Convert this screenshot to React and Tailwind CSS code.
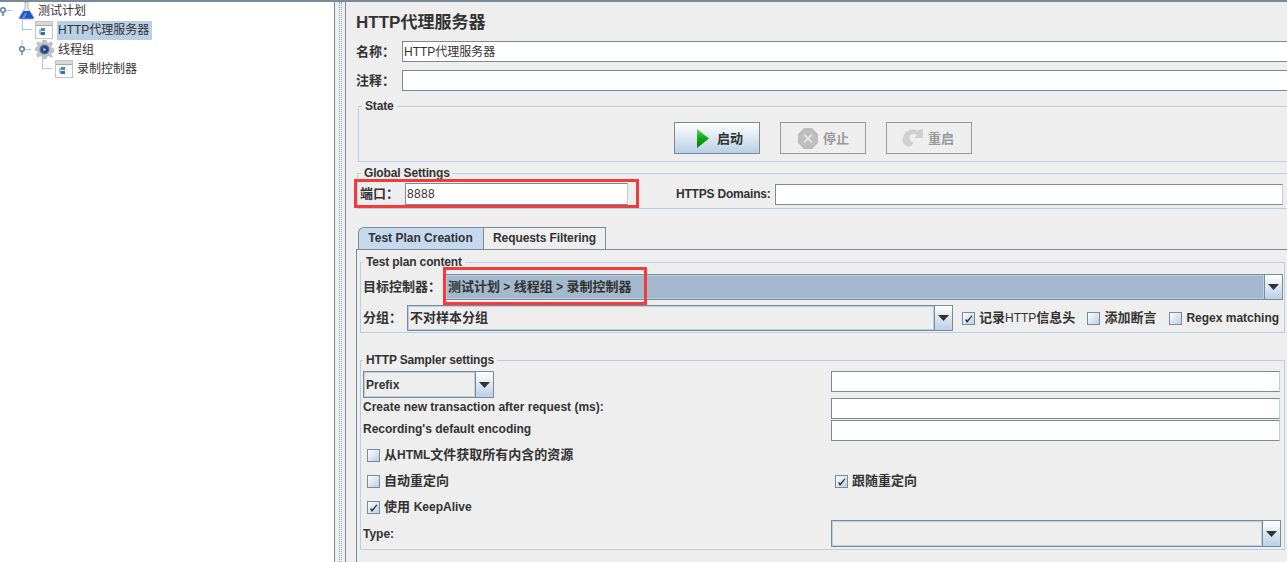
import React from 'react';

const FONT = "font-['Liberation_Sans','Noto_Sans_CJK_SC',sans-serif]";

const FlaskIcon = () => (
  <svg width="18" height="19" viewBox="0 0 18 19" className="shrink-0">
    <path d="M7 1h3v6l6 9c.4 1-.2 2-1.200 2H2.200C1.200 18 .6 17 1 16l6-9z" fill="#e4eaf1" stroke="#9aa7b4" strokeWidth="0.8" />
    <path d="M5.500 10h6l4 6.500c.2.700-.2 1.200-.8 1.200H2.300c-.6 0-1-.5-.8-1.200z" fill="#1f55c4" />
    <path d="M7 12h2l-2.500 5H4z" fill="#5f8fe6" />
  </svg>
);

const PageIcon = () => (
  <svg width="18" height="18" viewBox="0 0 18 18" className="shrink-0">
    <rect x="0.500" y="0.500" width="17" height="17" fill="#fff" stroke="#c4c4c4" />
    <rect x="1" y="1" width="16" height="3" fill="#d8d8d8" />
    <line x1="1" y1="4.500" x2="17" y2="4.500" stroke="#a8a8a8" />
    <rect x="6" y="7" width="4" height="3" fill="#3d8fd8" />
    <rect x="6" y="11" width="4" height="3" fill="#2d6fc0" />
    <path d="M5 8v5h1" fill="none" stroke="#555" strokeWidth="0.8" />
  </svg>
);

const GearIcon = () => (
  <svg width="19" height="19" viewBox="0 0 19 19" className="shrink-0">
    <path d="M8 0h3l.5 2.500 2.200.9L16 2l1.500 2.500-1.700 1.900.7 2.100 2.500.5v3l-2.500.5-.7 2.100 1.700 1.900L16 17l-2.300-1.400-2.200.9L11 19H8l-.5-2.500-2.200-.9L3 17l-1.500-2.500 1.700-1.900-.7-2.100L0 10V8l2.500-.5.7-2.100L1.500 4 3 2l2.300 1.400 2.200-.9z" fill="#c2c6cc" stroke="#9aa0a8" strokeWidth="0.6" />
    <circle cx="9.500" cy="9.500" r="5" fill="#4f6f96" />
    <circle cx="9.500" cy="9.500" r="3.500" fill="#27457a" />
    <path d="M8.300 7.500l3 2-3 2z" fill="#9fc0ee" />
  </svg>
);

// tree connector: vertical from the parent, then a short horizontal stub
const Elbow = ({ w, x }) => (
  <svg width={w} height="20" viewBox={`0 0 ${w} 20`} className="shrink-0">
    <line x1={x + 0.5} y1="0" x2={x + 0.5} y2="10" stroke="#a9c6e6" />
    <line x1={x} y1="9.500" x2={w - 3} y2="9.500" stroke="#a9c6e6" />
  </svg>
);

const Knob = ({ w, x, up }) => (
  <svg width={w} height="19" viewBox={`0 0 ${w} 19`} className="shrink-0">
    <line x1={x + 3} y1="9.500" x2={x + 9} y2="9.500" stroke="#a9c6e6" />
    <line x1={x} y1="11" x2={x} y2="15" stroke="#5e7fa8" strokeWidth="1.500" />
    {up && <line x1={x} y1="0" x2={x} y2="7" stroke="#a9c6e6" />}
    <circle cx={x} cy="9" r="2.300" fill="#fff" stroke="#5e7fa8" strokeWidth="1.500" />
  </svg>
);

const Tree = () => (
  <div className="w-[335px] shrink-0 bg-white border-r border-[#7a8a99] -mt-px text-xs text-[#333333]">
    <div className="flex items-center h-[19px]">
      <Knob w={18} x={3} />
      <FlaskIcon />
      <span className="ml-[2px]">测试计划</span>
    </div>
    <div className="flex items-center h-[20px]">
      <Elbow w={35} x={22} />
      <PageIcon />
      <span className="ml-[4px] bg-[#b8cfe5] h-[19px] leading-[19px] w-[95px] px-px">HTTP代理服务器</span>
    </div>
    <div className="flex items-center h-[19px]">
      <Knob w={35} x={22} up />
      <GearIcon />
      <span className="ml-[4px]">线程组</span>
    </div>
    <div className="flex items-center h-[19px]">
      <Elbow w={55} x={42} />
      <PageIcon />
      <span className="ml-[4px]">录制控制器</span>
    </div>
  </div>
);

const Splitter = () => (
  <div className="w-[10px] shrink-0 flex justify-center">
    <div className="w-[3px] h-full border-x border-dotted border-[#8fa3b8]" />
  </div>
);

const TextInput = ({ className, value }) => (
  <div className={`h-[21px] bg-white border border-[#7a8a99] border-r-[#b8cfe5] px-px pt-px text-xs font-normal text-[#333333] leading-[19px] ${className}`}>
    {value}
  </div>
);

const Combo = ({ className, value, selected, small }) => (
  <div className={`flex border border-[#7a8a99] ${className}`}>
    <div className={`flex-1 min-w-0 border border-[#b8cfe5] px-px font-bold text-[#333333] flex items-center ${small ? 'text-xs' : 'text-[13px]'} ${selected ? 'bg-[#a3b8cc]' : 'bg-[#eeeeee]'}`}>
      {value}
    </div>
    <div className="w-[18px] shrink-0 border-l border-[#7a8a99] bg-gradient-to-b from-white to-[#b8cfe5] flex items-center justify-center">
      <svg width="11" height="6" viewBox="0 0 11 6"><path d="M0 0h11L5.500 6z" fill="#333333" /></svg>
    </div>
  </div>
);

const Check = ({ checked, label, className }) => (
  <div className={`flex items-center gap-[4px] text-[13px] font-bold text-[#333333] ${className || ''}`}>
    <div className="w-[13px] h-[13px] shrink-0 border border-[#7a8a99] bg-gradient-to-br from-white to-[#b8cfe5] flex items-center justify-center">
      {checked && (
        <svg width="9" height="9" viewBox="0 0 9 9"><path d="M1 5.500h2v1L7.500 1.500 8.500 2 3.500 8.500H2.500z" fill="#333333" /></svg>
      )}
    </div>
    <span className="whitespace-nowrap">{label}</span>
  </div>
);

const Group = ({ title, className, legendClass, children }) => (
  <fieldset className={`border border-[#b8cfe5] ${className}`}>
    <legend className={`px-[3px] h-[14px] leading-[14px] text-xs font-bold text-[#333333] tracking-[-0.15px] ${legendClass}`}>{title}</legend>
    {children}
  </fieldset>
);

const ActionButton = ({ icon, label, disabled, className }) => (
  <div className={`w-[86px] h-[32px] border flex items-center text-[13px] font-bold ${className} ${disabled ? 'border-[#999999] text-[#999999]' : 'border-[#7a8a99] text-[#333333] bg-gradient-to-b from-white to-[#b8cfe5]'}`}>
    {icon}
    <span className="pt-px">{label}</span>
  </div>
);

const PlayIcon = () => (
  <svg width="12" height="19" viewBox="0 0 12 19">
    <defs>
      <linearGradient id="play" x1="0" y1="0" x2="0" y2="1">
        <stop offset="0" stopColor="#5fd05f" />
        <stop offset="0.500" stopColor="#0fa80f" />
        <stop offset="1" stopColor="#0a7a0a" />
      </linearGradient>
    </defs>
    <path d="M0 0l12 9.500L0 19z" fill="url(#play)" />
  </svg>
);

const StopIcon = () => (
  <svg width="20" height="21" viewBox="0 0 20 21">
    <path d="M6 0h8l6 6v9l-6 6H6l-6-6V6z" fill="#bdbdbd" />
    <path d="M6 6.500l8 8M14 6.500l-8 8" stroke="#e4e4e4" strokeWidth="1.800" />
  </svg>
);

const RestartIcon = () => (
  <svg width="22" height="20" viewBox="0 0 23 20">
    <path d="M1 11C1 4 8 0 14 1.500l2 1L19 1l3 0v9h-9l3-3c-3-2-7-1-8 1-1 3 1 6 4 7-1 2-3 4-5 4-4-1-7-4-7-9z" fill="#cfcfcf" />
  </svg>
);

const Label = ({ children, className }) => (
  <span className={`text-[13px] font-bold text-[#333333] whitespace-nowrap ${className || ''}`}>{children}</span>
);

const SmallLabel = ({ children, className }) => (
  <span className={`text-xs font-bold text-[#333333] whitespace-nowrap ${className || ''}`}>{children}</span>
);

const Latin = ({ children, className }) => (
  <span className={`text-xs ${className || ''}`}>{children}</span>
);

const Annotation = ({ className }) => (
  <div className={`absolute border-[3px] border-[#f23c3c] ${className}`} />
);

export default function App() {
  return (
    <div className={`relative flex w-[1287px] h-[562px] overflow-hidden bg-[#eeeeee] border-t-2 border-[#7a8a99] ${FONT}`}>
      <Tree />
      <Splitter />
      <div className="flex-1 min-w-0 border-l border-[#7a8a99] pl-[10px] overflow-hidden">
        <div className="w-[1000px]">
          <div className="mt-[12px] h-[18px] leading-[18px] text-[17px] font-bold text-[#333333]">HTTP代理服务器</div>

          <div className="flex items-center mt-[9px]">
            <Label className="w-[46px]">名称：</Label>
            <TextInput className="flex-1" value="HTTP代理服务器" />
          </div>
          <div className="flex items-center mt-[8px]">
            <Label className="w-[46px]">注释：</Label>
            <TextInput className="flex-1" value="" />
          </div>

          <Group title="State" className="mt-[8px] ml-[2px] h-[63px] border-r-0" legendClass="ml-[3px]">
            <div className="flex gap-[20px] pl-[315px] pt-[9px]">
              <ActionButton className="pl-[22px] gap-[8px]" icon={<PlayIcon />} label="启动" />
              <ActionButton className="pl-[17px] gap-[5px]" disabled icon={<StopIcon />} label="停止" />
              <ActionButton className="pl-[15px] gap-[4px]" disabled icon={<RestartIcon />} label="重启" />
            </div>
          </Group>

          <Group title="Global Settings" className="mt-[4px] ml-[1px] h-[43px] border-r-0" legendClass="ml-[3px]">
            <div className="flex items-center pt-[3px]">
              <Label className="w-[47px] pl-[2px]">端口：</Label>
              <TextInput className="w-[223px] h-[22px] tracking-[0.3px]" value="8888" />
              <SmallLabel className="ml-[48px] tracking-[-0.2px]">HTTPS Domains:</SmallLabel>
              <TextInput className="ml-[4px] w-[508px]" value="" />
            </div>
          </Group>

          <div className="flex mt-[18px] ml-[2px] h-[22px] text-xs font-bold text-[#333333]">
            <div className="w-[126px] pb-px pr-px rounded-tl-[6px] border border-b-0 border-[#7a8a99] bg-[#c4d9ee] flex items-center justify-center">Test Plan Creation</div>
            <div className="w-[122px] pb-px border border-b-0 border-l-0 border-[#7a8a99] bg-[#eeeeee] flex items-center justify-center tracking-[-0.1px]">Requests Filtering</div>
          </div>

          <div className="border-l border-t border-[#7a8a99] pl-[3px] pt-[5px] pb-[20px] w-[935px]">
            <Group title="Test plan content" className="h-[78px] w-[925px]" legendClass="ml-[2px]">
              <div className="flex items-center pl-[2px] pt-[5px]">
                <Label className="w-[82px]">目标控制器：</Label>
                <Combo
                  className="h-[26px] w-[838px]"
                  selected
                  value={<span>测试计划<Latin> &gt; </Latin>线程组<Latin> &gt; </Latin>录制控制器</span>}
                />
              </div>
              <div className="flex items-center pl-[2px] mt-[5px]">
                <Label className="w-[44px]">分组：</Label>
                <Combo className="h-[26px] w-[546px]" value="不对样本分组" />
                <Check className="ml-[9px]" checked label={<>记录<Latin className="font-normal">HTTP</Latin>信息头</>} />
                <Check className="ml-[12px]" label="添加断言" />
                <Check className="ml-[13px]" label={<Latin>Regex matching</Latin>} />
              </div>
            </Group>

            <Group title="HTTP Sampler settings" className="mt-[20px] h-[197px] w-[925px]" legendClass="ml-[2px]">
              <div className="grid grid-cols-[468px_449px] pl-[2px] pt-[4px]">
                <div className="flex flex-col">
                  <Combo small className="h-[27px] w-[131px]" value="Prefix" />
                  <SmallLabel className="-mt-px h-[20px] leading-[20px]">Create new transaction after request (ms):</SmallLabel>
                  <SmallLabel className="mt-[2px] h-[20px] leading-[20px]">Recording's default encoding</SmallLabel>
                </div>
                <div className="flex flex-col gap-[1px]">
                  <TextInput className="w-[449px]" value="" />
                  <TextInput className="w-[449px] mt-[5px]" value="" />
                  <TextInput className="w-[449px]" value="" />
                </div>
              </div>
              <Check className="ml-[6px] mt-px h-[26px]" label={<>从<Latin>HTML</Latin>文件获取所有内含的资源</>} />
              <div className="grid grid-cols-[468px_200px] pl-[6px] h-[26px] items-center">
                <Check label="自动重定向" />
                <Check label="跟随重定向" checked />
              </div>
              <Check className="ml-[6px] h-[26px]" checked label={<>使用 <Latin>KeepAlive</Latin></>} />
              <div className="grid grid-cols-[468px_450px] pl-[2px] items-center">
                <SmallLabel>Type:</SmallLabel>
                <Combo className="h-[27px]" value="" />
              </div>
            </Group>
          </div>
        </div>
      </div>

      <Annotation className="left-[354px] top-[177px] w-[285px] h-[29px]" />
      <Annotation className="left-[443px] top-[265px] w-[204px] h-[38px]" />
    </div>
  );
}
